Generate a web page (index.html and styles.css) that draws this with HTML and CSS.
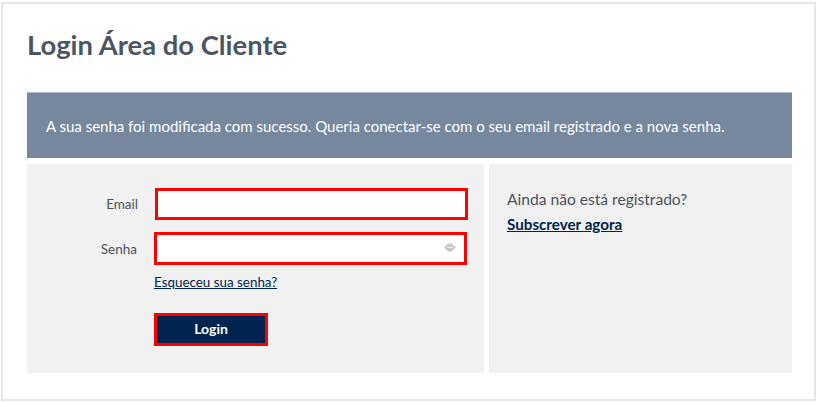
FILE: index.html
```html
<!DOCTYPE html>
<html lang="pt">
<head>
    <meta charset="UTF-8">
    <title>Login Área do Cliente</title>
    <link rel="stylesheet" href="styles.css">
</head>
<body>
    <div class="frame">
        <h1>Login Área do Cliente</h1>

        <div class="notice">A sua senha foi modificada com sucesso. Queria conectar-se com o seu email registrado e a nova senha.</div>

        <div class="panels">
            <form class="panel login">
                <div class="row">
                    <label for="email">Email</label>
                    <input id="email" type="text">
                </div>
                <div class="row row-senha">
                    <label for="senha">Senha</label>
                    <div class="senha-wrap">
                        <input id="senha" type="text">
                        <svg class="eye" width="12" height="9" viewBox="0 0 12 9">
                            <circle cx="6" cy="4.5" r="4.2" fill="#c8c8c8"/>
                            <path d="M0 4.5l2-2v4zM12 4.5l-2-2v4z" fill="#c8c8c8"/>
                            <path d="M3 4.5h6" stroke="#eee" stroke-width="1" fill="none"/>
                        </svg>
                    </div>
                </div>
                <a class="forgot" href="#">Esqueceu sua senha?</a>
                <button type="button">Login</button>
            </form>

            <div class="panel register">
                <p>Ainda não está registrado?</p>
                <a href="#">Subscrever agora</a>
            </div>
        </div>
    </div>
</body>
</html>
```

FILE: styles.css
```css
:root {
    --navy: #00234f;
    --gray-panel: #f1f1f1;
    --gray-text: #4a5260;
    --red: #fe0000;
}

html, body {
    margin: 0;
    background: white;
}

body {
    font-family: Lato, "Open Sans", sans-serif;
    color: var(--gray-text);
    padding: 2px 2px 0 1px;
}

.frame {
    width: 815px;
    height: 399px;
    box-sizing: border-box;
    border: 2px solid #e6e6e6;
    padding: 0 22px 0 24px;
}

h1 {
    margin: 0;
    padding-top: 24px;
    height: 88px;
    box-sizing: border-box;
    font-size: 27.4px;
    line-height: 34px;
    font-weight: 700;
    color: #4b5563;
}

.notice {
    background: #76879e;
    border-top: 1px solid #b3bdcb;
    height: 66px;
    box-sizing: border-box;
    padding-left: 19px;
    line-height: 66px;
    font-size: 15px;
    color: white;
}

.panels {
    display: flex;
    gap: 5px;
    margin-top: 6px;
    height: 209px;
}

.panel {
    background: var(--gray-panel);
    box-sizing: border-box;
}

.login {
    width: 457px;
    padding-top: 24px;
    display: flex;
    flex-direction: column;
    align-items: flex-start;
}

.register {
    width: 303px;
    padding: 25px 18px;
    font-size: 15.6px;
    line-height: 20px;
}

.register p {
    margin: 0 0 5px;
}

.register a {
    color: var(--navy);
    font-weight: 700;
    font-size: 15.2px;
}

.row {
    display: flex;
    align-items: center;
    gap: 17px;
}

.row-senha {
    margin-top: 12px;
    margin-left: -1px;
}

.row label {
    width: 111px;
    text-align: right;
    font-size: 13.5px;
}

.senha-wrap {
    position: relative;
}

input {
    display: block;
    width: 313px;
    height: 32px;
    box-sizing: border-box;
    border: 3px solid var(--red);
    background: white;
    outline: none;
}

#senha {
    height: 33px;
}

.eye {
    position: absolute;
    top: 11px;
    right: 11px;
}

.forgot {
    margin: 9px 0 0 127px;
    font-size: 13.4px;
    line-height: 16px;
    color: var(--navy);
}

button {
    margin: 23px 0 0 127px;
    padding: 0 0 2px;
    width: 114px;
    height: 33px;
    box-sizing: border-box;
    border: 3px solid var(--red);
    background: var(--navy);
    color: white;
    font-family: inherit;
    font-size: 14px;
    font-weight: 700;
}
```
